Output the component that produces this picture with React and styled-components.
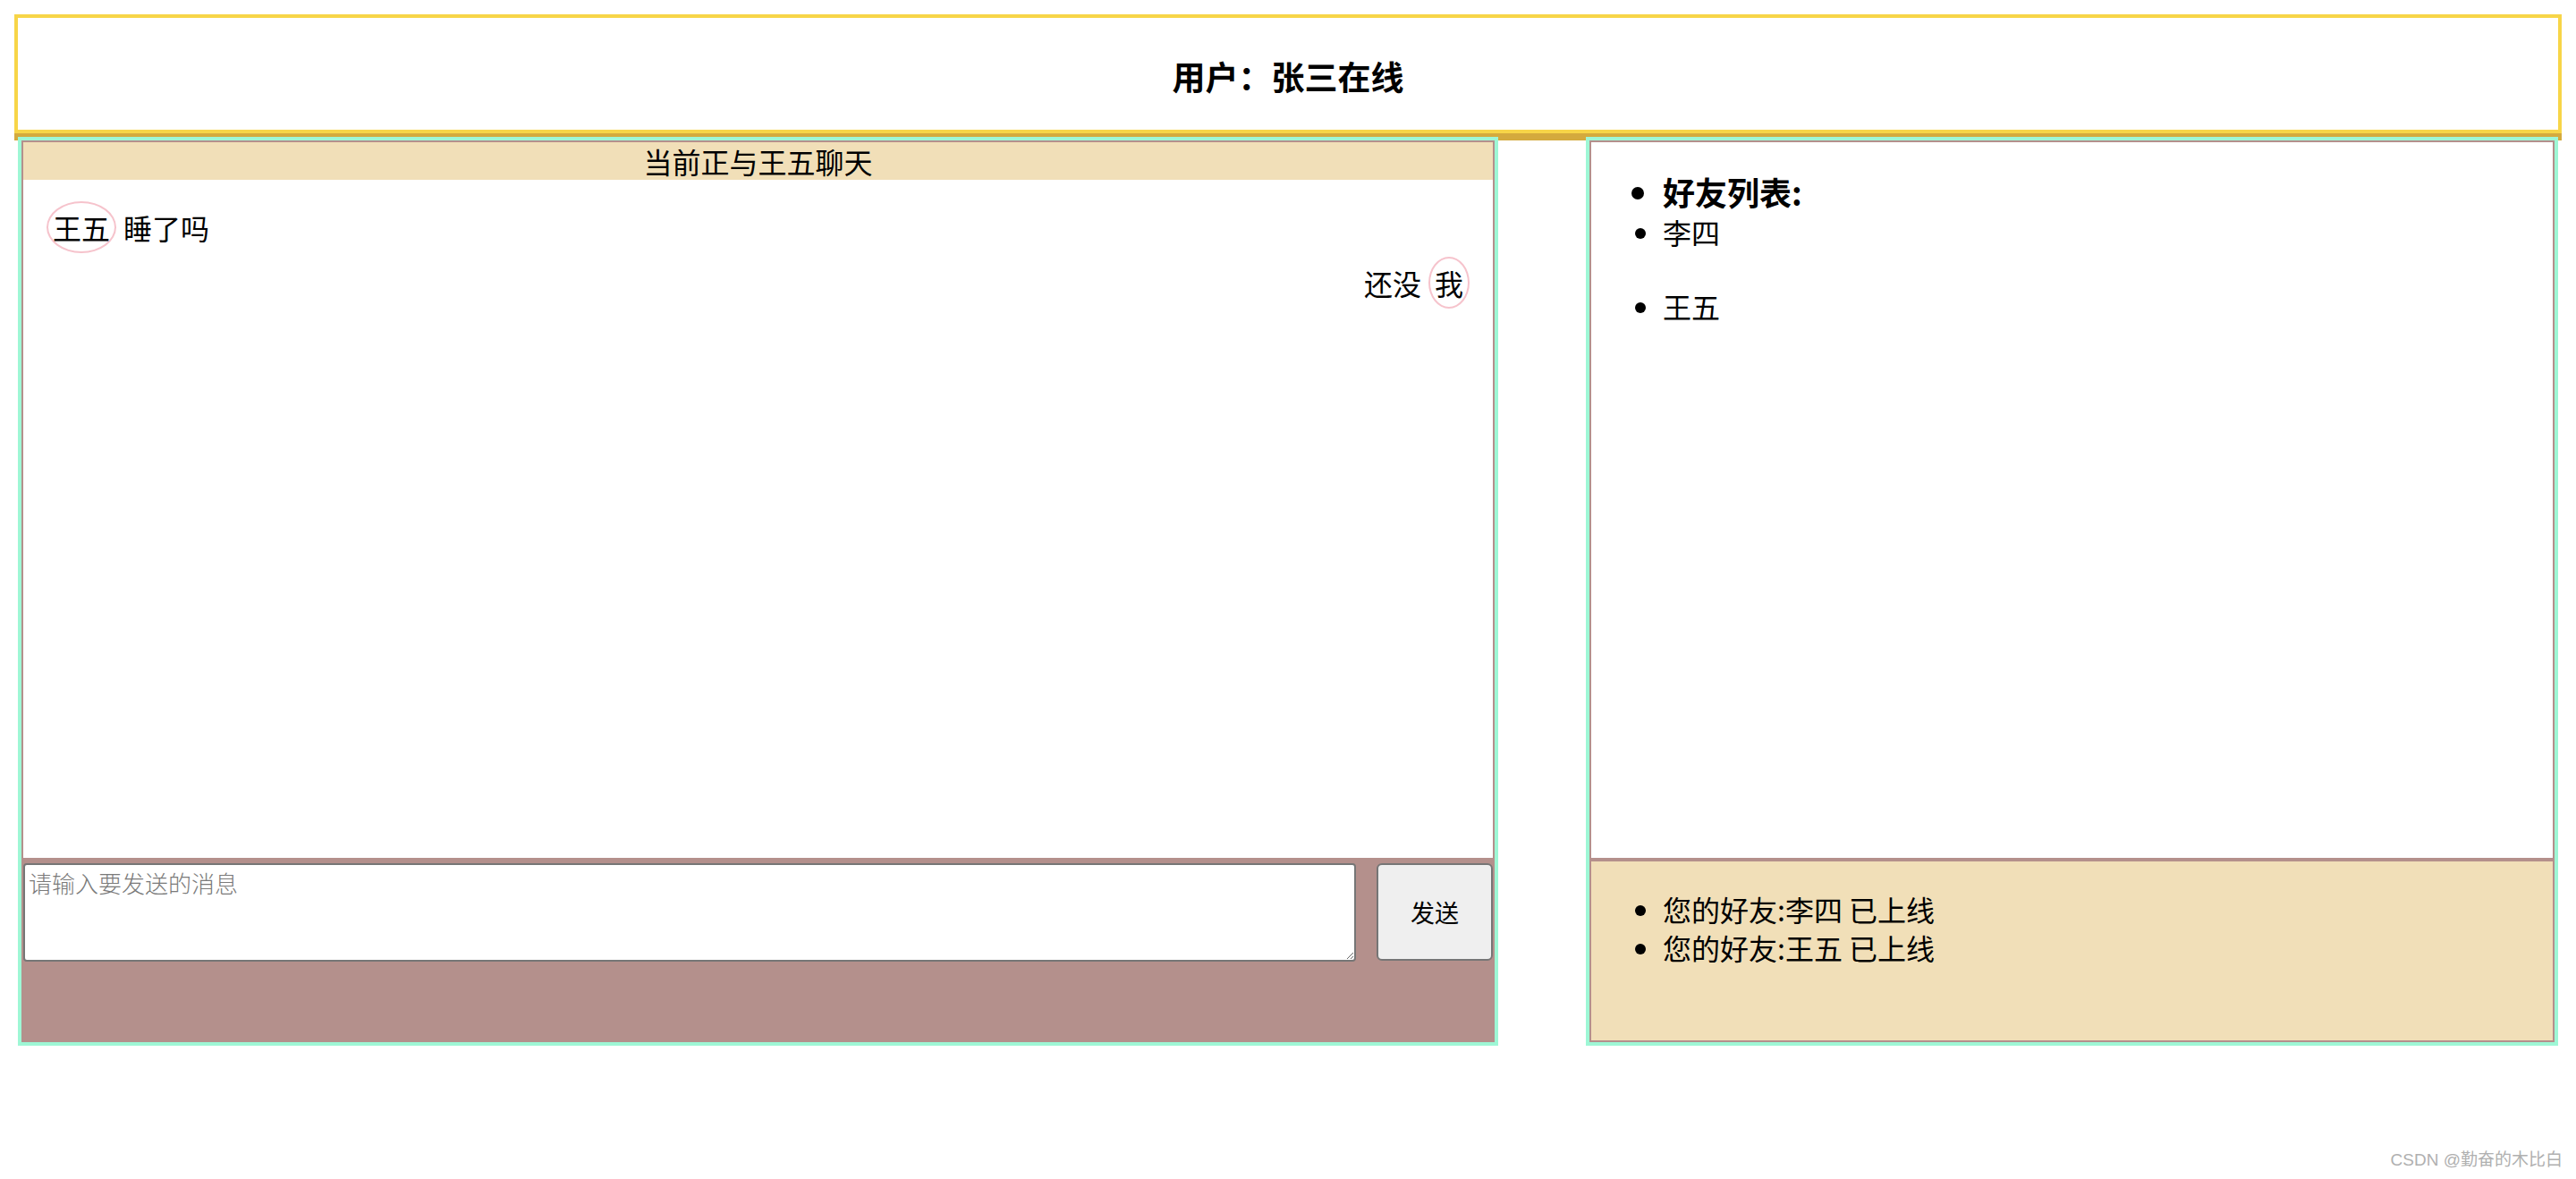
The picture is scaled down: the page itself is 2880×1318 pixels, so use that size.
import styled, { createGlobalStyle } from "styled-components";

const GlobalStyle = createGlobalStyle`
  body {
    margin: 0;
    font-family: "Noto Sans CJK SC", "Noto Sans", sans-serif;
    font-size: 32px;
    color: #000;
    background: #fff;
  }
`;

const Page = styled.div`
  position: relative;
  min-height: 100vh;
  box-sizing: border-box;
  padding: 16px;
`;

const Header = styled.header`
  height: 133px;
  box-sizing: border-box;
  border: 4px solid #f7d548;
  box-shadow: 0 8px 0 #d4aa3d;
  display: flex;
  align-items: center;
  justify-content: center;
  padding-top: 4px;
  font-size: 37px;
  font-weight: bold;
`;

const Main = styled.main`
  position: relative;
  margin: 4px 4px 0;
  height: 1016px;
  display: flex;
  justify-content: space-between;
`;

const Panel = styled.section`
  width: ${(props) => props.width}px;
  box-sizing: border-box;
  border: 4px solid #9ef7d5;
  display: flex;
  flex-direction: column;
  background: #fff;
`;

const ChatBox = styled.div`
  flex: 1;
  border: 2px solid #b4908c;
  display: flex;
  flex-direction: column;
  background: #fff;
`;

const TitleBar = styled.div`
  height: 42px;
  line-height: 42px;
  text-align: center;
  background: #f1dfb8;
`;

const MessageList = styled.div`
  padding: 24px 26px;
  display: flex;
  flex-direction: column;
  gap: 4px;
`;

const MessageRow = styled.div`
  display: flex;
  align-items: center;
  gap: 8px;
  justify-content: ${(props) => (props.mine ? "flex-end" : "flex-start")};
  line-height: 42px;
`;

const Avatar = styled.span`
  border: 2px solid #f6c3cc;
  border-radius: 50%;
  padding: 6px 5px;
  line-height: 42px;
`;

const InputBox = styled.div`
  height: 204px;
  box-sizing: border-box;
  border: 2px solid #b4908c;
  background: #b4908c;
  padding-top: 2px;
  display: flex;
  align-items: flex-start;
  justify-content: space-between;
`;

const MessageInput = styled.textarea`
  width: 1490px;
  height: 110px;
  box-sizing: border-box;
  margin: 0;
  padding: 4px;
  border: 2px solid #767676;
  border-radius: 4px;
  font-family: "Noto Sans CJK SC", sans-serif;
  font-size: 26px;
  font-weight: 300;
  line-height: 32px;

  &::placeholder {
    color: #7a7a7a;
  }
`;

const SendButton = styled.button`
  width: 130px;
  height: 109px;
  margin: 0;
  border: 2px solid #767676;
  border-radius: 6px;
  background: #efefef;
  font-family: "Noto Sans CJK SC", sans-serif;
  font-size: 27px;
  color: #000;
`;

const FriendBox = styled.div`
  flex: 1;
  border: 2px solid #b4908c;
  background: #fff;
`;

const NoticeBox = styled.div`
  height: 204px;
  box-sizing: border-box;
  border: 2px solid #b4908c;
  background: #f1dfb8;
`;

const List = styled.ul`
  margin: 32px 0;
  padding-left: 80px;
`;

const Item = styled.li`
  font-size: ${(props) => (props.heading ? "36px" : "32px")};
  font-weight: ${(props) => (props.heading ? "bold" : "normal")};
  line-height: ${(props) => (props.heading ? "47px" : "43px")};
  margin-top: ${(props) => props.gap || 0}px;
`;

const Watermark = styled.div`
  position: absolute;
  right: 15px;
  bottom: 10px;
  font-family: "Liberation Sans", "Noto Sans CJK SC", sans-serif;
  font-size: 19px;
  color: #b0b0b0;
`;

const messages = [
  { id: 1, from: "王五", text: "睡了吗", mine: false },
  { id: 2, from: "我", text: "还没", mine: true },
];

const friends = ["李四", "王五"];

const notices = ["您的好友:李四 已上线", "您的好友:王五 已上线"];

const App = () => {
  return (
    <Page>
      <GlobalStyle />
      <Header>用户：张三在线</Header>
      <Main>
        <Panel width={1655}>
          <ChatBox>
            <TitleBar>当前正与王五聊天</TitleBar>
            <MessageList>
              {messages.map((msg) =>
                msg.mine ? (
                  <MessageRow mine key={msg.id}>
                    <span>{msg.text}</span>
                    <Avatar>{msg.from}</Avatar>
                  </MessageRow>
                ) : (
                  <MessageRow key={msg.id}>
                    <Avatar>{msg.from}</Avatar>
                    <span>{msg.text}</span>
                  </MessageRow>
                )
              )}
            </MessageList>
          </ChatBox>
          <InputBox>
            <MessageInput placeholder="请输入要发送的消息" />
            <SendButton>发送</SendButton>
          </InputBox>
        </Panel>

        <Panel width={1087}>
          <FriendBox>
            <List>
              <Item heading>好友列表:</Item>
              {friends.map((name, i) => (
                <Item key={name} gap={i > 0 ? 40 : 0}>
                  {name}
                </Item>
              ))}
            </List>
          </FriendBox>
          <NoticeBox>
            <List>
              {notices.map((n) => (
                <Item key={n}>{n}</Item>
              ))}
            </List>
          </NoticeBox>
        </Panel>
      </Main>
      <Watermark>CSDN @勤奋的木比白</Watermark>
    </Page>
  );
};

export default App;
